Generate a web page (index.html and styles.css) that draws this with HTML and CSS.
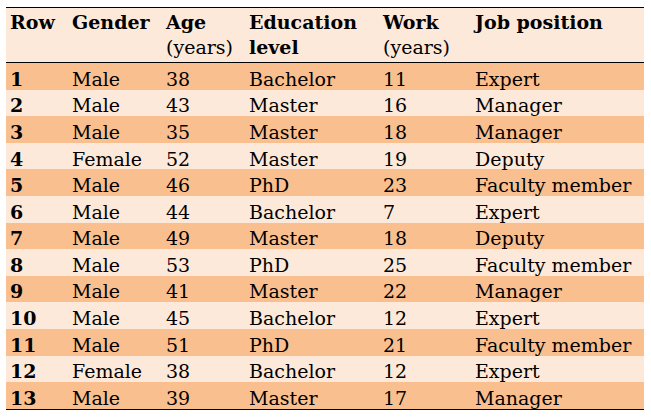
FILE: index.html
```html
<!DOCTYPE html>
<html>
<head>
<meta charset="utf-8">
<link rel="stylesheet" href="styles.css">
</head>
<body>
<div class="page">
<table class="data">
  <colgroup>
    <col class="c-row"><col class="c-gender"><col class="c-age"><col class="c-edu"><col class="c-work"><col class="c-job">
  </colgroup>
  <thead>
    <tr>
      <th>Row</th>
      <th>Gender</th>
      <th>Age<br><span class="unit">(years)</span></th>
      <th>Education<br>level</th>
      <th>Work<br><span class="unit">(years)</span></th>
      <th>Job position</th>
    </tr>
  </thead>
  <tbody>
    <tr class="dark"><td class="num">1</td><td>Male</td><td>38</td><td>Bachelor</td><td>11</td><td>Expert</td></tr>
    <tr class="light"><td class="num">2</td><td>Male</td><td>43</td><td>Master</td><td>16</td><td>Manager</td></tr>
    <tr class="dark"><td class="num">3</td><td>Male</td><td>35</td><td>Master</td><td>18</td><td>Manager</td></tr>
    <tr class="light"><td class="num">4</td><td>Female</td><td>52</td><td>Master</td><td>19</td><td>Deputy</td></tr>
    <tr class="dark"><td class="num">5</td><td>Male</td><td>46</td><td>PhD</td><td>23</td><td>Faculty member</td></tr>
    <tr class="light"><td class="num">6</td><td>Male</td><td>44</td><td>Bachelor</td><td>7</td><td>Expert</td></tr>
    <tr class="dark"><td class="num">7</td><td>Male</td><td>49</td><td>Master</td><td>18</td><td>Deputy</td></tr>
    <tr class="light"><td class="num">8</td><td>Male</td><td>53</td><td>PhD</td><td>25</td><td>Faculty member</td></tr>
    <tr class="dark"><td class="num">9</td><td>Male</td><td>41</td><td>Master</td><td>22</td><td>Manager</td></tr>
    <tr class="light"><td class="num">10</td><td>Male</td><td>45</td><td>Bachelor</td><td>12</td><td>Expert</td></tr>
    <tr class="dark"><td class="num">11</td><td>Male</td><td>51</td><td>PhD</td><td>21</td><td>Faculty member</td></tr>
    <tr class="light"><td class="num">12</td><td>Female</td><td>38</td><td>Bachelor</td><td>12</td><td>Expert</td></tr>
    <tr class="dark last"><td class="num">13</td><td>Male</td><td>39</td><td>Master</td><td>17</td><td>Manager</td></tr>
  </tbody>
</table>
</div>
</body>
</html>
```
FILE: styles.css
```css
html, body {
  margin: 0;
  padding: 0;
  background: #ffffff;
}
.page {
  padding: 7px 0 0 6px;
}
.data {
  border-collapse: separate;
  border-spacing: 0;
  table-layout: fixed;
  width: 638px;
  font-family: "DejaVu Serif", "Liberation Serif", serif;
  font-size: 19px;
  color: #000000;
}
.c-row { width: 62px; }
.c-gender { width: 94px; }
.c-age { width: 83px; }
.c-edu { width: 134px; }
.c-work { width: 92px; }
.c-job { width: 173px; }

.data th {
  background: #fde9d9;
  text-align: left;
  vertical-align: top;
  font-weight: bold;
  line-height: 25px;
  padding: 2.2px 0 1.8px 4px;
  border-top: 1px solid #000;
  border-bottom: 1px solid #000;
  white-space: nowrap;
}
.data th .unit {
  font-weight: normal;
}
.data td {
  line-height: 20px;
  padding: 5.75px 0 0.85px 4px;
  white-space: nowrap;
}
.data td.num {
  font-weight: bold;
}
.dark td { background: #fabf8f; }
.light td { background: #fde9d9; }
.last td { border-bottom: 1px solid #000; }
```
